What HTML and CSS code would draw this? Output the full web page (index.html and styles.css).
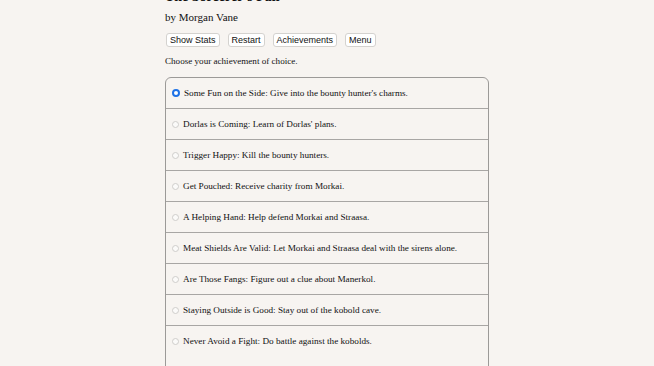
FILE: index.html
```html
<!DOCTYPE html>
<html>
<head>
<meta charset="utf-8">
<link rel="stylesheet" href="styles.css">
</head>
<body>
<div class="page">
  <h1 class="title">The Sorcerer's Fall</h1>
  <div class="author">by Morgan Vane</div>
  <div class="buttons">
    <button class="btn">Show Stats</button>
    <button class="btn">Restart</button>
    <button class="btn">Achievements</button>
    <button class="btn">Menu</button>
  </div>
  <p class="prompt">Choose your achievement of choice.</p>
  <div class="choices">
    <label class="choice"><span class="radio checked"></span><span>Some Fun on the Side: Give into the bounty hunter's charms.</span></label>
    <label class="choice"><span class="radio"></span><span>Dorlas is Coming: Learn of Dorlas' plans.</span></label>
    <label class="choice"><span class="radio"></span><span>Trigger Happy: Kill the bounty hunters.</span></label>
    <label class="choice"><span class="radio"></span><span>Get Pouched: Receive charity from Morkai.</span></label>
    <label class="choice"><span class="radio"></span><span>A Helping Hand: Help defend Morkai and Straasa.</span></label>
    <label class="choice"><span class="radio"></span><span>Meat Shields Are Valid: Let Morkai and Straasa deal with the sirens alone.</span></label>
    <label class="choice"><span class="radio"></span><span>Are Those Fangs: Figure out a clue about Manerkol.</span></label>
    <label class="choice"><span class="radio"></span><span>Staying Outside is Good: Stay out of the kobold cave.</span></label>
    <label class="choice"><span class="radio"></span><span>Never Avoid a Fight: Do battle against the kobolds.</span></label>
  </div>
</div>
</body>
</html>
```

FILE: styles.css
```css
html, body {
  margin: 0;
  padding: 0;
  background: #f7f4f1;
  overflow: hidden;
}
body {
  font-family: "Liberation Serif", "Times New Roman", serif;
  color: #111;
}
.page {
  width: 324px;
  margin: -12px auto 0;
}
.title {
  font-size: 14px;
  font-weight: bold;
  margin: 0;
  line-height: 17px;
}
.author {
  font-size: 11px;
  line-height: 14px;
  margin-top: 5px;
}
.buttons {
  display: flex;
  gap: 8px;
  margin-top: 9px;
  padding-left: 1px;
}
.btn {
  font-family: "Liberation Sans", Arial, sans-serif;
  font-size: 9px;
  line-height: 10px;
  padding: 1px 3px;
  background: #fff;
  border: 1px solid #d4d2cf;
  border-radius: 3px;
  color: #111;
}
.prompt {
  font-size: 9.1px;
  margin: 8px 0 0;
  line-height: 12px;
}
.choices {
  margin-top: 10px;
  height: 300px;
  border: 1px solid #9c9a98;
  border-radius: 6px;
  overflow: hidden;
}
.choice {
  display: flex;
  align-items: center;
  gap: 4px;
  height: 30px;
  padding-left: 6px;
  font-size: 9.2px;
  border-top: 1px solid #a8a6a4;
}
.choice:first-child {
  border-top: none;
}
.radio {
  width: 7px;
  height: 7px;
  border-radius: 50%;
  border: 1px solid #cfcdcb;
  background: #fbfaf9;
  box-sizing: border-box;
  flex: none;
}
.radio.checked {
  border: 2px solid #1f72e6;
  background: #fff;
  width: 8px;
  height: 8px;
}
```
